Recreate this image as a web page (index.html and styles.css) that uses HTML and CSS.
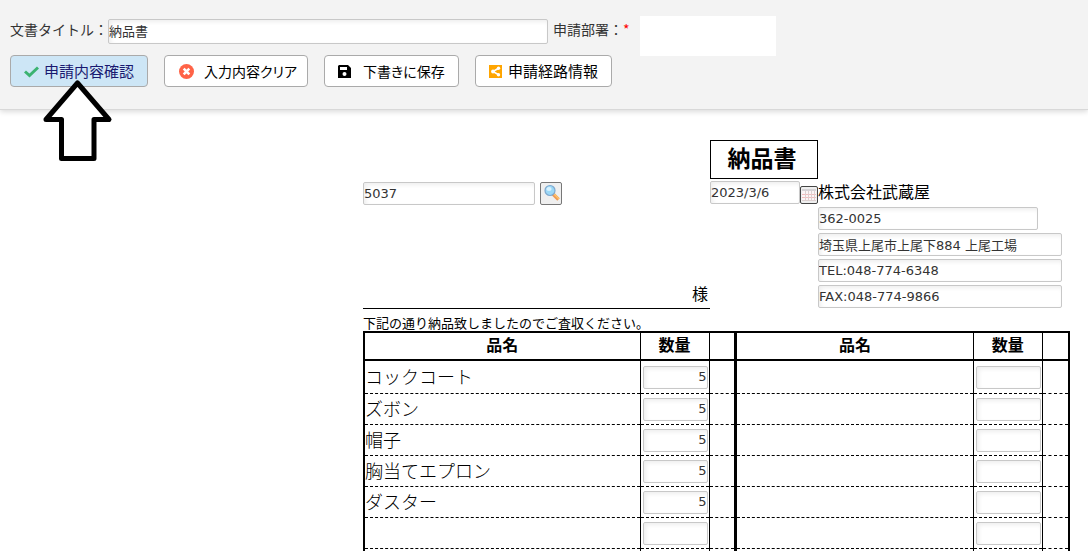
FILE: index.html
```html
<!DOCTYPE html>
<html lang="ja">
<head>
<meta charset="utf-8">
<meta name="viewport" content="width=device-width, initial-scale=1">
<title>納品書</title>
<link rel="stylesheet" href="styles.css">
</head>
<body>
<header class="toolbar">
  <div class="doc-row">
    <label for="doc-title">文書タイトル：</label>
    <input class="field doc-title" id="doc-title" type="text" value="納品書">
    <span class="dept-label">申請部署：<span class="required">*</span></span>
    <div class="dept-value"></div>
  </div>
  <div class="actions">
    <button class="action action-primary" type="button">
      <svg class="icon" viewBox="0 0 15 15"><path d="M1 7.500 5.500 11.500 14 3.500" fill="none" stroke="#3cb371" stroke-width="3"/></svg>
      申請内容確認
      <svg class="arrow" viewBox="0 0 70 84"><path d="M34.500 4 66 40.500H51V79.500H18.500V40.500H3Z" fill="#fff" stroke="#000" stroke-width="5" stroke-linejoin="round"/></svg>
    </button>
    <button class="action action-clear" type="button">
      <svg class="icon" viewBox="0 0 15 15"><circle cx="7.500" cy="7.500" r="7.500" fill="#ff6347"/><path d="M4.700 4.700 10.300 10.300M10.300 4.700 4.700 10.300" stroke="#fff" stroke-width="2.600"/></svg>
      入力内容クリア
    </button>
    <button class="action action-save" type="button">
      <svg class="icon" viewBox="0 0 15 15"><path d="M2 1H11L14 4V14H1V2Z" fill="#000"/><path d="M3 3H10V6H3Z" fill="#fff"/><circle cx="7.500" cy="10" r="2" fill="#fff"/></svg>
      下書きに保存
    </button>
    <button class="action action-route" type="button">
      <svg class="icon" viewBox="0 0 15 15"><path d="M1 1H14V14H1Z" fill="#ffa500"/><path d="M11 4 5 7.500 11 11" fill="none" stroke="#fff" stroke-width="1.500"/><circle cx="10.500" cy="4.300" r="1.700" fill="#fff"/><circle cx="5" cy="7.500" r="1.900" fill="#fff"/><circle cx="10.500" cy="10.700" r="1.700" fill="#fff"/></svg>
      申請経路情報
    </button>
  </div>
</header>

<main class="sheet">
  <div class="top">
    <section class="customer">
      <div class="code">
        <input class="field code-input" type="text" value="5037" aria-label="得意先コード">
        <button class="search" type="button" aria-label="検索">
          <svg viewBox="0 0 20 20"><path d="M12 10 17.500 15.500" stroke="#ee9a55" stroke-width="3.600"/><path d="M12.500 9.500 18 15" stroke="#ffc46b" stroke-width="1.400"/><circle cx="9" cy="6.500" r="5" fill="#9bd8f7" stroke="#7fa9cf" stroke-width="1.200"/><ellipse cx="8" cy="5" rx="2.600" ry="2" fill="#d8f2ff"/></svg>
        </button>
      </div>
      <div class="name-line">様</div>
    </section>
    <section class="issuer">
      <h1 class="title">納品書</h1>
      <div class="date">
        <input class="field date-input" type="text" value="2023/3/6" aria-label="日付">
        <button class="calendar" type="button" aria-label="カレンダー">
          <svg viewBox="0 0 14 14"><path d="M0 1H14V13H0Z" fill="#fbf5f5"/><path d="M0 1H14V3H0Z" fill="#d6d3d6"/><path d="M0 6.500H14M0 9.500H14" stroke="#f3bcbc"/><path d="M3.500 3V13M6.500 3V13M9.500 3V13M12.500 3V13M0 12.500H14" stroke="#ddd0d0"/></svg>
        </button>
      </div>
      <div class="company">
        <div class="company-name">株式会社武蔵屋</div>
        <input class="field zip" type="text" value="362-0025" aria-label="郵便番号">
        <input class="field" type="text" value="埼玉県上尾市上尾下884 上尾工場" aria-label="住所">
        <input class="field" type="text" value="TEL:048-774-6348" aria-label="電話">
        <input class="field" type="text" value="FAX:048-774-9866" aria-label="FAX">
      </div>
    </section>
  </div>
  <p class="note">下記の通り納品致しましたのでご査収ください。</p>
  <table class="items">
    <colgroup><col class="c-name"><col class="c-qty"><col class="c-gap"><col class="c-name2"><col class="c-qty"><col class="c-gap"></colgroup>
    <thead>
      <tr><th>品名</th><th>数量</th><td></td><th class="half">品名</th><th>数量</th><td></td></tr>
    </thead>
    <tbody>
      <tr><td>コックコート</td><td class="qty"><input class="field" type="text" value="5" aria-label="数量"></td><td></td><td class="half"></td><td class="qty"><input class="field" type="text" aria-label="数量"></td><td></td></tr>
      <tr><td>ズボン</td><td class="qty"><input class="field" type="text" value="5" aria-label="数量"></td><td></td><td class="half"></td><td class="qty"><input class="field" type="text" aria-label="数量"></td><td></td></tr>
      <tr><td>帽子</td><td class="qty"><input class="field" type="text" value="5" aria-label="数量"></td><td></td><td class="half"></td><td class="qty"><input class="field" type="text" aria-label="数量"></td><td></td></tr>
      <tr><td>胸当てエプロン</td><td class="qty"><input class="field" type="text" value="5" aria-label="数量"></td><td></td><td class="half"></td><td class="qty"><input class="field" type="text" aria-label="数量"></td><td></td></tr>
      <tr><td>ダスター</td><td class="qty"><input class="field" type="text" value="5" aria-label="数量"></td><td></td><td class="half"></td><td class="qty"><input class="field" type="text" aria-label="数量"></td><td></td></tr>
      <tr><td></td><td class="qty"><input class="field" type="text" aria-label="数量"></td><td></td><td class="half"></td><td class="qty"><input class="field" type="text" aria-label="数量"></td><td></td></tr>
      <tr><td></td><td class="qty"><input class="field" type="text" aria-label="数量"></td><td></td><td class="half"></td><td class="qty"><input class="field" type="text" aria-label="数量"></td><td></td></tr>
    </tbody>
  </table>
</main>
</body>
</html>
```
FILE: styles.css
```css
* { box-sizing: border-box; }

body {
  margin: 0;
  height: 100vh;
  overflow: hidden;
  background: #fff;
  color: #000;
  font: 14px/20px "Noto Sans CJK JP", sans-serif;
}

.field {
  display: block;
  width: 100%;
  height: 23px;
  padding: 0 0 1px;
  border: 1px solid #c8c8c8;
  border-radius: 2px;
  background: #fff;
  box-shadow: inset 2px 2px 4px #eee;
  color: #333;
  font: 13px/20px "DejaVu Sans", "Noto Sans CJK JP", sans-serif;
}

.toolbar {
  padding: 16px 10px 22px;
  border-bottom: 1px solid #d8d8d8;
  background: #f3f3f3;
  box-shadow: 0 2px 5px #ddd;
}

.doc-row {
  display: flex;
  height: 39px;
  color: #333;
}
.doc-row > label,
.dept-label { padding-top: 3px; white-space: nowrap; }
.doc-title { width: 440px; height: 25px; margin: 3px 5px 0 0; padding-bottom: 3px; }
.required { color: #f00; }
.dept-value { width: 136px; height: 40px; margin-left: 10px; background: #fff; }

.actions { display: flex; gap: 16px; }
.action {
  position: relative;
  display: flex;
  align-items: center;
  gap: 5px;
  height: 32px;
  padding: 0 13px;
  border: 1px solid #aaa;
  border-radius: 4px;
  background: #fff;
  color: #000;
  font: 15px/20px "Noto Sans CJK JP", sans-serif;
  white-space: nowrap;
}
.action-primary { background: #cde6f6; color: #191970; }
.action-clear { width: 144px; padding: 0 14px; gap: 10px; font-size: 14px; font-feature-settings: "palt"; }
.action-save { width: 135px; padding: 0 12px; gap: 11px; font-size: 14px; font-feature-settings: "palt"; }
.action-route { width: 137px; padding: 0 12px; }
.icon { flex: none; width: 15px; height: 15px; }
.arrow { position: absolute; z-index: 1; left: 32px; top: 23px; width: 70px; height: 84px; }

.sheet { padding: 30px 18px 0 363px; }
.top { display: grid; grid-template-columns: 347fr 360fr; }

.customer {
  display: flex;
  flex-direction: column;
  justify-content: space-between;
  padding-top: 42px;
  border-bottom: 1px solid #000;
}
.code { display: flex; gap: 5px; }
.code-input { width: 172px; }
.search {
  width: 22px;
  height: 23px;
  padding: 0;
  border: 1px solid #777;
  border-radius: 2px;
  background: #efefef;
}
.search svg { display: block; width: 20px; height: 20px; }
.name-line { padding: 0 2px 5px; text-align: right; font-size: 16px; line-height: 20px; }

.issuer { display: grid; grid-template-columns: 108px 1fr; align-content: start; padding-bottom: 1px; }
.title {
  grid-column: 1;
  height: 39px;
  margin: 0;
  padding-right: 4px;
  border: 1px solid #000;
  text-align: center;
  font-size: 23px;
  line-height: 33px;
}
.date { grid-column: 1; display: flex; padding-top: 2px; }
.date-input { width: 90px; }
.calendar {
  width: 18px;
  height: 18px;
  margin-top: 5px;
  padding: 1px;
  border: 1px solid #444;
  border-radius: 2px;
  background: #efefef;
}
.calendar svg { display: block; width: 14px; height: 14px; }
.company { grid-column: 2; display: grid; gap: 3px; padding-right: 8px; }
.company-name { height: 25px; font-size: 16px; line-height: 24px; }
.zip { width: 220px; }

.note { margin: 6px 0 0; font-size: 13px; line-height: 16px; }

.items {
  width: 100%;
  border: 2px solid #000;
  border-collapse: collapse;
  table-layout: fixed;
}
.c-name { width: 39.2%; }
.c-name2 { width: 33.7%; }
.c-qty { width: 9.8%; }
.c-gap { width: 3.8%; }
.items th,
.items td { border-left: 1px solid #000; padding: 0; }
.items thead tr { height: 28px; border-bottom: 2px solid #000; }
.items th { padding-bottom: 4px; font-size: 16px; line-height: 20px; }
.items tbody tr { height: 31px; }
.items tbody tr:first-child { height: 33px; }
.items tbody td { padding-bottom: 2px; border-bottom: 1px dashed #000; font-size: 18px; font-weight: 300; line-height: 24px; }
.items .half { border-left: 3px solid #000; }
.items tbody .qty { padding: 4px 1px 3px 2px; }
.qty .field { text-align: right; }
```
